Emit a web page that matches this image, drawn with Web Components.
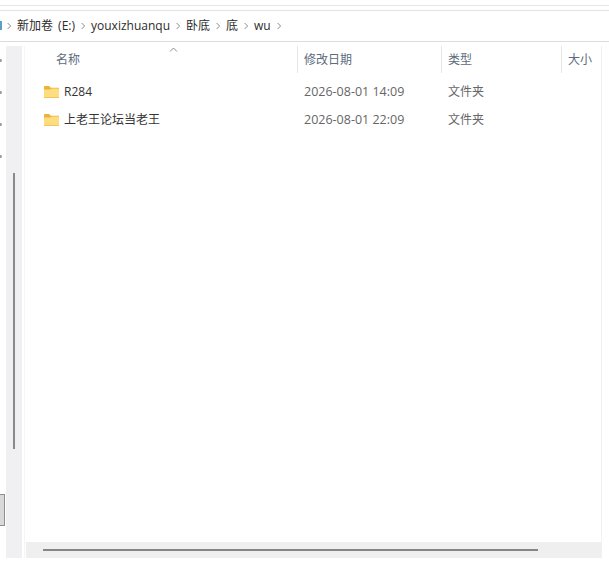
<!DOCTYPE html>
<html lang="zh"><head><meta charset="utf-8"><title>wu</title>
<style>
html,body{margin:0;padding:0;background:#fff;overflow:hidden}
body{font-family:"Open Sans","Noto Sans CJK SC",sans-serif;width:609px;height:565px}
fx-crumb:first-child{word-spacing:2px}
</style></head><body>
<fx-window>
  <fx-address>
    <fx-crumb>新加卷 (E:)</fx-crumb>
    <fx-crumb>youxizhuanqu</fx-crumb>
    <fx-crumb>卧底</fx-crumb>
    <fx-crumb>底</fx-crumb>
    <fx-crumb>wu</fx-crumb>
    <fx-crumb></fx-crumb>
  </fx-address>
  <fx-body>
    <fx-nav></fx-nav>
    <fx-list>
      <fx-row name="R284" date="2026-08-01 14:09" type="文件夹"></fx-row>
      <fx-row name="上老王论坛当老王" date="2026-08-01 22:09" type="文件夹"></fx-row>
    </fx-list>
  </fx-body>
</fx-window>
<script>
function def(tag, html, init){
  customElements.define(tag, class extends HTMLElement{
    constructor(){super();this.attachShadow({mode:'open'}).innerHTML=html;}
    connectedCallback(){ if(init) init(this); }
  });
}
def('fx-window',`<style>
:host{display:flex;flex-direction:column;width:609px;height:565px;box-sizing:border-box;padding-top:5px}
.l1{height:1px;background:#e6e6e6;margin-bottom:4px;flex:none}
.l2{height:1px;background:#e3e3e3;flex:none}
</style><div class="l1"></div><div class="l2"></div><slot></slot>`);

def('fx-address',`<style>
:host{display:flex;align-items:center;height:31px;flex:none;box-sizing:border-box;border-bottom:1px solid #dcdcdc;position:relative;padding-left:5px}
.cut{position:absolute;left:0;top:10px;width:1.5px;height:9px;background:#5b9ec9}
</style><span class="cut"></span><slot></slot>`);

def('fx-crumb',`<style>
:host{display:inline-flex;align-items:center;font-size:12px;line-height:16px;color:#2c2c2c;white-space:nowrap}
svg{width:8px;height:8px;margin:0 4px 0 0;flex:none}
span{margin-right:4px}
</style><svg viewBox="0 0 8 8"><path d="M2.6 1 5.6 4 2.6 7" fill="none" stroke="#8c8c8c" stroke-width="1"/></svg><span><slot></slot></span>`);

def('fx-body',`<style>
:host{display:flex;flex:1;min-height:0;padding-top:4px;padding-bottom:7px;box-sizing:border-box}
</style><slot></slot>`);

def('fx-nav',`<style>
:host{display:flex;flex:none;width:26px;position:relative}
.rail{width:6px;flex:none;position:relative}
.dot{position:absolute;left:-1px;width:3px;height:3px;background:#9a9a9a;border-radius:50%}
.box{position:absolute;left:-1px;top:448px;width:6px;height:32px;background:#d8d8d8;border:1px solid #8f8f8f;box-sizing:border-box}
.track{width:16px;flex:none;background:#f0f0f2;display:flex;flex-direction:column;align-items:center;box-sizing:border-box;padding-top:127px}
.thumb{width:2px;height:276px;background:#8a8a8a;margin-right:1px}
.edge{width:1px;margin-left:2px;background:#f5f5f7}
</style><div class="rail">
<i class="dot" style="top:13px"></i><i class="dot" style="top:45px"></i><i class="dot" style="top:77px"></i><i class="dot" style="top:109px"></i>
<i class="box"></i></div>
<div class="track"><div class="thumb"></div></div><div class="edge"></div>`);

def('fx-list',`<style>
:host{display:flex;flex-direction:column;width:575px;flex:none;border-right:1px solid #f1f1f1;font-size:12px;box-sizing:content-box;position:relative}
.head{display:grid;grid-template-columns:271px 144px 120px 40px;height:27px;flex:none;color:#5d6b7d;position:relative}
.head div{display:flex;align-items:center;padding-left:6px;border-left:1px solid #e6e6e6;box-sizing:border-box;line-height:16px;height:27px}
.head div:first-child{border-left:0;padding-left:30px}
.caret{position:absolute;left:143px;top:1px;width:9px;height:5px}
.rows{flex:1;padding-top:5px;min-height:0}
.hbar{height:16px;flex:none;background:#efefef;display:flex;align-items:center;padding-left:17px}
.hbar i{display:block;width:495px;height:2px;background:#868686}
</style>
<div class="head"><div>名称</div><div>修改日期</div><div>类型</div><div>大小</div>
<svg class="caret" viewBox="0 0 9 5"><path d="M1 4.5 4.5 1 8 4.5" fill="none" stroke="#8a8a8a"/></svg></div>
<div class="rows"><slot></slot></div>
<div class="hbar"><i></i></div>`);

def('fx-row',`<style>
:host{display:grid;grid-template-columns:271px 144px 120px;height:28px;align-items:center;font-size:12px;line-height:16px;color:#666}
.n{display:flex;align-items:center;padding-left:17px;color:#333}
svg{width:17px;height:14px;margin-right:4px;flex:none}
.d{padding-left:7px;font-size:12.5px}
.t{padding-left:7px}
</style>
<div class="n"><svg viewBox="0 0 17 14"><path d="M1 2.2C1 1.5 1.5 1 2.2 1H6l1.8 1.8H16V13H1.6C1.2 13 1 12.8 1 12.4Z" fill="#ecb338"/><path d="M1 4.6H7l1.8-1.2H15.2c.5 0 .8.3.8.8v8c0 .5-.3.8-.8.8H1.8c-.5 0-.8-.3-.8-.8Z" fill="#fedd80"/><path d="M1 12h15v.2c0 .5-.3.8-.8.8H1.8c-.5 0-.8-.3-.8-.8Z" fill="#f2c65e"/></svg><span id="n"></span></div>
<div class="d" id="d"></div><div class="t" id="t"></div>`,
el=>{const s=el.shadowRoot;for(const [i,a] of [['n','name'],['d','date'],['t','type']])s.getElementById(i).textContent=el.getAttribute(a);});
</script>
</body></html>
